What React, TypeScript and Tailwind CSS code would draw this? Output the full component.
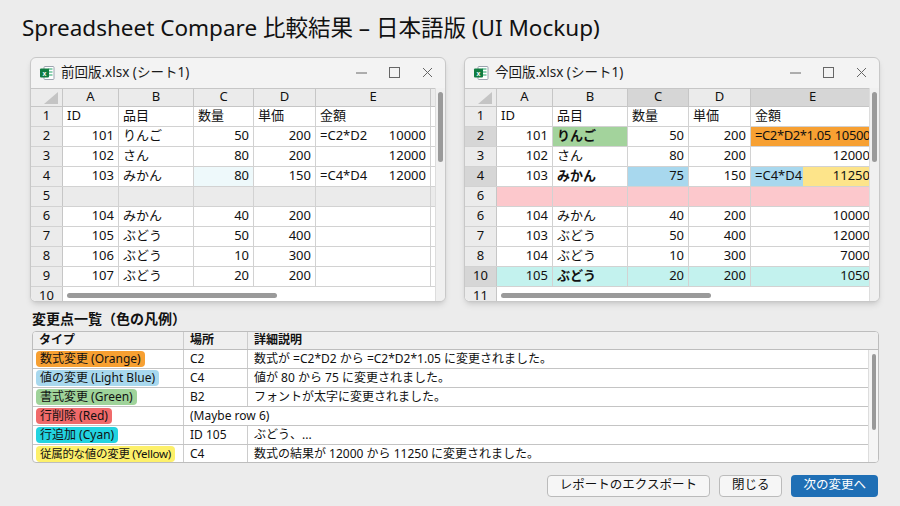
import React from "react";

const F = { fontFamily: '"Noto Sans", "Noto Sans CJK JP", sans-serif' };

type Cell = { t?: string; f?: string; align?: "r" | "l"; bg?: string; bold?: boolean; split?: boolean };

function XlIcon() {
  return (
    <svg width="16" height="16" viewBox="0 0 16 16">
      <rect x="5" y="1.5" width="10" height="13" rx="1" fill="#fff" stroke="#9ca3af" />
      <line x1="9" y1="4" x2="13.5" y2="4" stroke="#21a366" />
      <line x1="9" y1="7" x2="13.5" y2="7" stroke="#21a366" />
      <line x1="9" y1="10" x2="13.5" y2="10" stroke="#21a366" />
      <rect x="1" y="3.5" width="9" height="9" rx="1" fill="#107c41" />
      <text x="5.5" y="10.5" fontSize="7" fill="#fff" textAnchor="middle" fontFamily="Liberation Sans" fontWeight="bold">x</text>
    </svg>
  );
}

function Sheet({
  title,
  widths,
  rows,
  lastRow,
  hiCols,
}: {
  title: string;
  widths: string[];
  rows: { n: string; cells: Cell[]; rowBg?: string; nhi?: boolean }[];
  lastRow: string;
  hiCols: number[];
}) {
  const cols = ["A", "B", "C", "D", "E"];
  return (
    <div className="w-[420px] h-[245px] bg-[#f3f3f3] border border-[#c8c8c8] rounded-md shadow-md flex flex-col overflow-hidden">
      <div className="h-[30px] flex items-center pl-2 pr-3 text-[13.5px] text-[#1a1a1a] shrink-0">
        <XlIcon />
        <span className="ml-1.5">{title}</span>
        <div className="ml-auto flex items-center gap-[22px] text-[#555]">
          <svg width="11" height="11"><line x1="0" y1="6" x2="11" y2="6" stroke="#666" /></svg>
          <svg width="11" height="11"><rect x="0.5" y="0.5" width="10" height="10" fill="none" stroke="#666" /></svg>
          <svg width="11" height="11"><path d="M1 1 L10 10 M10 1 L1 10" stroke="#666" /></svg>
        </div>
      </div>
      <div className="flex flex-1 min-h-0">
        <div className="flex-1 min-w-0 flex flex-col bg-white text-[13px] text-[#111]">
          <div className="flex h-[19px] bg-[#ebebeb] border-y border-[#c6c6c6] shrink-0">
            <div className="w-[32px] border-r border-[#c6c6c6] relative shrink-0">
              <svg className="absolute right-1 bottom-0.5" width="14" height="12"><polygon points="14,0 14,12 0,12" fill="#c4c4c4" /></svg>
            </div>
            {cols.map((c, i) => (
              <div key={c} className={`${widths[i]} shrink-0 border-r border-[#c6c6c6] flex items-center justify-center ${hiCols.includes(i) ? "bg-[#d6d6d6]" : ""}`}>{c}</div>
            ))}
          </div>
          {rows.map((r, ri) => (
            <div key={ri} className={`flex h-[20px] border-b border-[#d2d2d2] shrink-0 ${r.rowBg ?? ""}`}>
              <div className={`w-[32px] shrink-0 border-r border-[#c6c6c6] flex items-center justify-center ${r.nhi ? "bg-[#d6d6d6]" : "bg-[#ebebeb]"}`}>{r.n}</div>
              {r.cells.map((c, i) =>
                c.split ? (
                  <div key={i} className={`${widths[i]} shrink-0 border-r border-[#d2d2d2] flex whitespace-nowrap`}>
                    <div className="w-[52px] bg-[#a8d8ee] flex items-center px-1">{c.f}</div>
                    <div className="flex-1 bg-[#fde48a] flex items-center justify-end px-1">{c.t}</div>
                  </div>
                ) : (
                  <div key={i} className={`${widths[i]} shrink-0 border-r border-[#d2d2d2] flex items-center px-1 whitespace-nowrap ${c.bg ?? ""} ${c.bold ? "font-bold" : ""} ${c.align === "r" ? "justify-end" : "justify-start"}`}>
                    {c.f ? (
                      <div className="flex w-full justify-between"><span>{c.f}</span><span>{c.t}</span></div>
                    ) : (
                      c.t
                    )}
                  </div>
                )
              )}
            </div>
          ))}
          <div className="flex h-[18px] relative shrink-0">
            <div className="w-[32px] shrink-0 border-r border-[#c6c6c6] bg-[#ebebeb] flex items-start justify-center leading-[16px]">{lastRow}</div>
            <div className="absolute left-[36px] top-[6px] w-[210px] h-[5px] rounded bg-[#9a9a9a]" />
          </div>
        </div>
        <div className="w-[10px] bg-[#f0f0f0] border-l border-[#ddd] flex justify-center pt-1">
          <div className="w-[5px] h-[70px] rounded bg-[#9a9a9a]" />
        </div>
      </div>
    </div>
  );
}

const LW = ["w-[56px]", "w-[75px]", "w-[60px]", "w-[62px]", "w-[115px]"];
const RW = ["w-[56px]", "w-[75px]", "w-[61px]", "w-[62px]", "w-[124px]"];

const hdr = (): Cell[] => [{ t: "ID" }, { t: "品目" }, { t: "数量" }, { t: "単価" }, { t: "金額" }];
const row = (a: string, b: string, c: string, d: string, e = "", f?: string): Cell[] => [
  { t: a, align: "r" },
  { t: b },
  { t: c, align: "r" },
  { t: d, align: "r" },
  { t: e, f, align: "r" },
];

const leftRows = [
  { n: "1", cells: hdr() },
  { n: "2", cells: row("101", "りんご", "50", "200", "10000", "=C2*D2") },
  { n: "3", cells: row("102", "さん", "80", "200", "12000") },
  { n: "4", cells: (() => { const r = row("103", "みかん", "80", "150", "12000", "=C4*D4"); r[2].bg = "bg-[#eef9fb]"; return r; })() },
  { n: "5", cells: row("", "", "", ""), rowBg: "bg-[#ebebeb]" },
  { n: "6", cells: row("104", "みかん", "40", "200") },
  { n: "7", cells: row("105", "ぶどう", "50", "400") },
  { n: "8", cells: row("106", "ぶどう", "10", "300") },
  { n: "9", cells: row("107", "ぶどう", "20", "200") },
];

const r2: Cell[] = row("101", "りんご", "50", "200", "10500", "=C2*D2*1.05");
r2[1].bg = "bg-[#a3d39c]"; r2[1].bold = true; r2[4].bg = "bg-[#f7a032] tracking-[-0.4px]";
const r4: Cell[] = [
  { t: "103", align: "r" }, { t: "みかん", bold: true }, { t: "75", align: "r", bg: "bg-[#a8d8ee]" }, { t: "150", align: "r" },
  { f: "=C4*D4", t: "11250", split: true },
];
const r10: Cell[] = row("105", "ぶどう", "20", "200", "1050"); r10[1].bold = true;

const rightRows = [
  { n: "1", cells: hdr() },
  { n: "2", cells: r2, nhi: true },
  { n: "3", cells: row("102", "さん", "80", "200", "12000") },
  { n: "4", cells: r4, nhi: true },
  { n: "6", cells: row("", "", "", ""), rowBg: "bg-[#fcc8cc]" },
  { n: "6", cells: row("104", "みかん", "40", "200", "10000") },
  { n: "7", cells: row("103", "ぶどう", "50", "400", "12000") },
  { n: "8", cells: row("104", "ぶどう", "10", "300", "7000") },
  { n: "10", cells: r10, rowBg: "bg-[#c3f2ee]", nhi: true },
];

const legend = [
  { tag: "数式変更 (Orange)", c: "bg-[#f7a032]", p: "C2", d: "数式が =C2*D2 から =C2*D2*1.05 に変更されました。" },
  { tag: "値の変更 (Light Blue)", c: "bg-[#a8d8ee]", p: "C4", d: "値が 80 から 75 に変更されました。" },
  { tag: "書式変更 (Green)", c: "bg-[#9fd39a]", p: "B2", d: "フォントが太字に変更されました。" },
  { tag: "行削除 (Red)", c: "bg-[#f06a6a]", p: "", d: "", span: "(Maybe row 6)" },
  { tag: "行追加 (Cyan)", c: "bg-[#22d3e0]", p: "ID 105", d: "ぶどう、..." },
  { tag: "従属的な値の変更 (Yellow)", c: "bg-[#fdf06a]", p: "C4", d: "数式の結果が 12000 から 11250 に変更されました。" },
];

export default function App() {
  return (
    <div style={F} className="w-[900px] h-[506px] bg-[#ececec] overflow-hidden flex flex-col px-[20px] text-[#111]">
      <h1 className="text-[22.5px] leading-none mt-[17px] ml-[2px] text-[#111]">Spreadsheet Compare 比較結果 – 日本語版 (UI Mockup)</h1>
      <div className="flex gap-[18px] mt-[17px] ml-[10px]">
        <Sheet title="前回版.xlsx (シート1)" widths={LW} rows={leftRows} lastRow="10" hiCols={[]} />
        <Sheet title="今回版.xlsx (シート1)" widths={RW} rows={rightRows} lastRow="11" hiCols={[2, 4]} />
      </div>
      <div className="mt-[6px] ml-[12px] text-[14px] font-bold">変更点一覧（色の凡例）</div>
      <div className="ml-[12px] mt-[2px] w-[847px] h-[132px] border border-[#bdbdbd] rounded-sm bg-white flex flex-col text-[12px] overflow-hidden">
        <div className="flex h-[18px] bg-[#efefef] border-b border-[#bdbdbd] font-bold shrink-0">
          <div className="w-[151px] px-1.5 border-r border-[#ccc] flex items-center">タイプ</div>
          <div className="w-[64px] px-1.5 border-r border-[#ccc] flex items-center">場所</div>
          <div className="flex-1 px-1.5 flex items-center">詳細説明</div>
        </div>
        <div className="flex flex-1">
          <div className="flex-1">
            {legend.map((l, i) => (
              <div key={i} className="flex h-[19px] border-b border-[#c4c4c4]">
                <div className="w-[151px] px-[3px] border-r border-[#ccc] flex items-center whitespace-nowrap">
                  <span className={`${l.c} rounded px-1 leading-[16px] ${i === 5 ? "text-[11.5px] tracking-[-0.3px]" : ""}`}>{l.tag}</span>
                </div>
                {l.span ? (
                  <div className="flex-1 px-1.5 flex items-center">{l.span}</div>
                ) : (
                  <>
                    <div className="w-[64px] px-1.5 border-r border-[#ccc] flex items-center">{l.p}</div>
                    <div className="flex-1 px-1.5 flex items-center">{l.d}</div>
                  </>
                )}
              </div>
            ))}
          </div>
          <div className="w-[10px] border-l border-[#ddd] bg-[#f5f5f5] flex justify-center pt-1">
            <div className="w-[4px] h-[76px] rounded bg-[#999]" />
          </div>
        </div>
      </div>
      <div className="flex justify-end gap-[9px] mt-[12px] mr-[2px] text-[12.5px]">
        <button className="h-[22px] px-3 border border-[#bbb] rounded bg-[#f6f6f6]">レポートのエクスポート</button>
        <button className="h-[22px] px-3 border border-[#bbb] rounded bg-[#f6f6f6]">閉じる</button>
        <button className="h-[22px] px-3 rounded bg-[#1f6fb5] text-white">次の変更へ</button>
      </div>
    </div>
  );
}
